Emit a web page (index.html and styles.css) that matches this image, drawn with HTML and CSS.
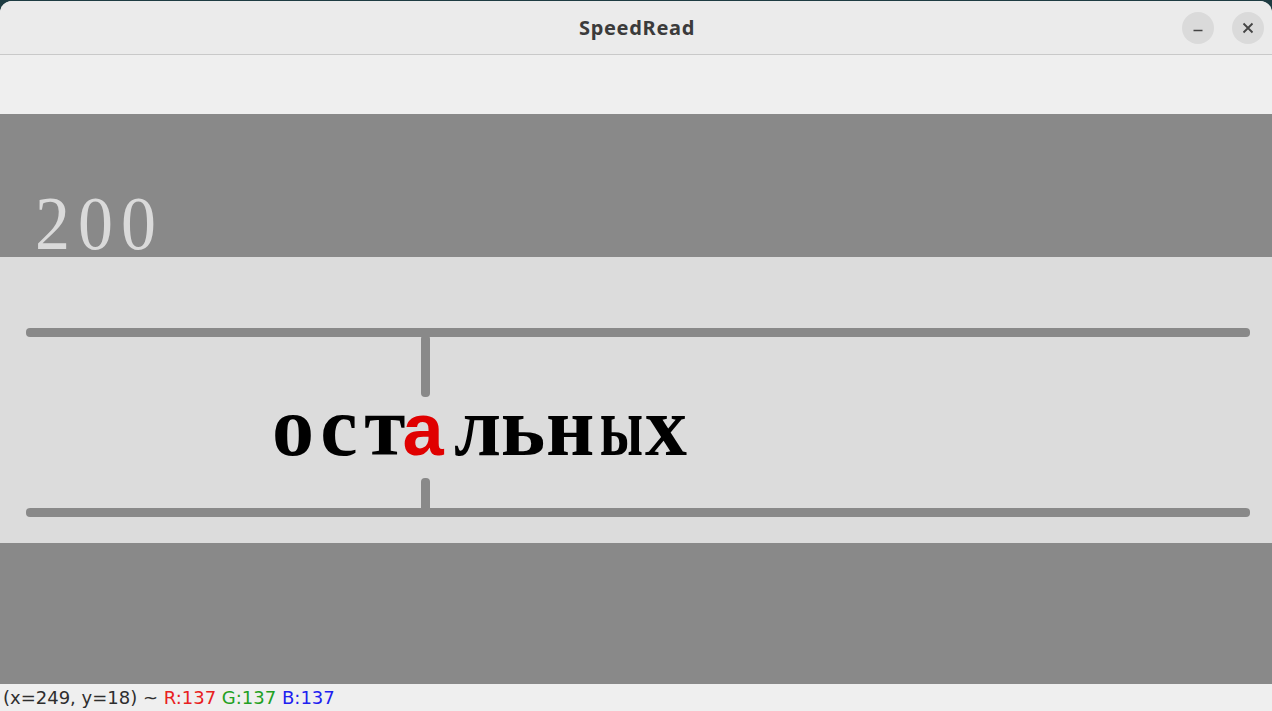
FILE: index.html
```html
<!DOCTYPE html>
<html>
<head>
<meta charset="utf-8">
<link rel="stylesheet" href="styles.css">
</head>
<body>
<div class="window">
  <header class="titlebar">
    <div class="title">SpeedRead</div>
    <div class="controls">
      <button class="wbtn" aria-label="minimize">
        <svg width="14" height="14" viewBox="0 0 14 14"><path d="M2.5 9.5h9" stroke="#444" stroke-width="1.6" fill="none"/></svg>
      </button>
      <button class="wbtn" aria-label="close">
        <svg width="14" height="14" viewBox="0 0 14 14"><path d="M2.5 2.5l9 9M11.5 2.5l-9 9" stroke="#444" stroke-width="1.8" fill="none"/></svg>
      </button>
    </div>
  </header>
  <div class="toolbar"></div>
  <section class="wpm-band">
    <div class="wpm"><span class="digit">2</span><span class="digit">0</span><span class="digit">0</span></div>
  </section>
  <section class="reader">
    <div class="rule rule-top"></div>
    <div class="tick tick-top"></div>
    <div class="word"><span class="ch">о</span><span class="ch">с</span><span class="ch">т</span><span class="ch focus">а</span><span class="ch">л</span><span class="ch">ь</span><span class="ch">н</span><span class="ch wide">ы</span><span class="ch">х</span></div>
    <div class="tick tick-bottom"></div>
    <div class="rule rule-bottom"></div>
  </section>
  <section class="lower-band"></section>
  <footer class="status">(x=249, y=18) ~ <span class="r">R:137</span> <span class="g">G:137</span> <span class="b">B:137</span></footer>
</div>
</body>
</html>
```
FILE: styles.css
```css
html, body {
  margin: 0;
  padding: 0;
  background: #1e3c42;
  width: 1272px;
  height: 711px;
  overflow: hidden;
}
.window {
  width: 1272px;
  height: 710px;
  margin-top: 1px;
  display: flex;
  flex-direction: column;
  background: #efefef;
  border-radius: 12px 12px 0 0;
  overflow: hidden;
}
.titlebar {
  height: 53px;
  flex: none;
  background: #ebebeb;
  border-bottom: 1px solid #c9c9c9;
  position: relative;
  display: flex;
  align-items: center;
  justify-content: center;
}
.title {
  font-family: "Noto Sans", "DejaVu Sans", sans-serif;
  font-weight: bold;
  font-size: 20px;
  letter-spacing: 0.7px;
  color: #3b3b3b;
  margin-left: 2px;
}
.controls {
  position: absolute;
  right: 8px;
  top: 11px;
  display: flex;
  gap: 18px;
}
.wbtn {
  width: 32px;
  height: 32px;
  border: none;
  border-radius: 50%;
  background: #dadada;
  padding: 0;
  display: flex;
  align-items: center;
  justify-content: center;
}
.toolbar {
  height: 59px;
  flex: none;
  background: #efefef;
}
.wpm-band {
  height: 143px;
  flex: none;
  background: #898989;
  position: relative;
}
.wpm {
  position: absolute;
  left: 31px;
  top: 78px;
  display: flex;
  font-family: "Liberation Serif", "Times New Roman", serif;
  font-size: 70px;
  line-height: 60px;
  color: #dadada;
  transform: scaleY(1.08);
  transform-origin: 0 0;
}
.digit {
  display: inline-block;
  width: 43px;
  text-align: center;
}
.reader {
  height: 286px;
  flex: none;
  background: #dcdcdc;
  position: relative;
}
.rule {
  position: absolute;
  left: 26px;
  width: 1224px;
  height: 9px;
  border-radius: 4px;
  background: #898989;
}
.rule-top { top: 71px; }
.rule-bottom { top: 251px; }
.tick {
  position: absolute;
  left: 421px;
  width: 9px;
  background: #898989;
  border-radius: 4px;
}
.tick-top { top: 78px; height: 62px; }
.tick-bottom { top: 221px; height: 34px; }
.word {
  position: absolute;
  left: 270px;
  top: 128px;
  display: flex;
  align-items: baseline;
  font-family: "Liberation Serif", "DejaVu Serif", serif;
  font-weight: bold;
  font-size: 84px;
  line-height: 84px;
  color: #000;
  white-space: nowrap;
}
.ch {
  display: inline-block;
  width: 46px;
  text-align: center;
}
.wide {
  transform: scaleX(0.66);
  margin-right: 5px;
}
.focus {
  color: #e00000;
  font-family: "Liberation Sans", "DejaVu Sans", sans-serif;
  font-weight: bold;
  font-size: 74px;
  margin-left: -8px;
  margin-right: 8px;
}
.lower-band {
  height: 141px;
  flex: none;
  background: #898989;
}
.status {
  flex: 1;
  background: #efefef;
  font-family: "DejaVu Sans", sans-serif;
  font-size: 18px;
  line-height: 27px;
  color: #2e2e2e;
  padding-left: 3px;
  white-space: nowrap;
}
.r { color: #e82020; }
.g { color: #22a022; }
.b { color: #2020f0; }
```
